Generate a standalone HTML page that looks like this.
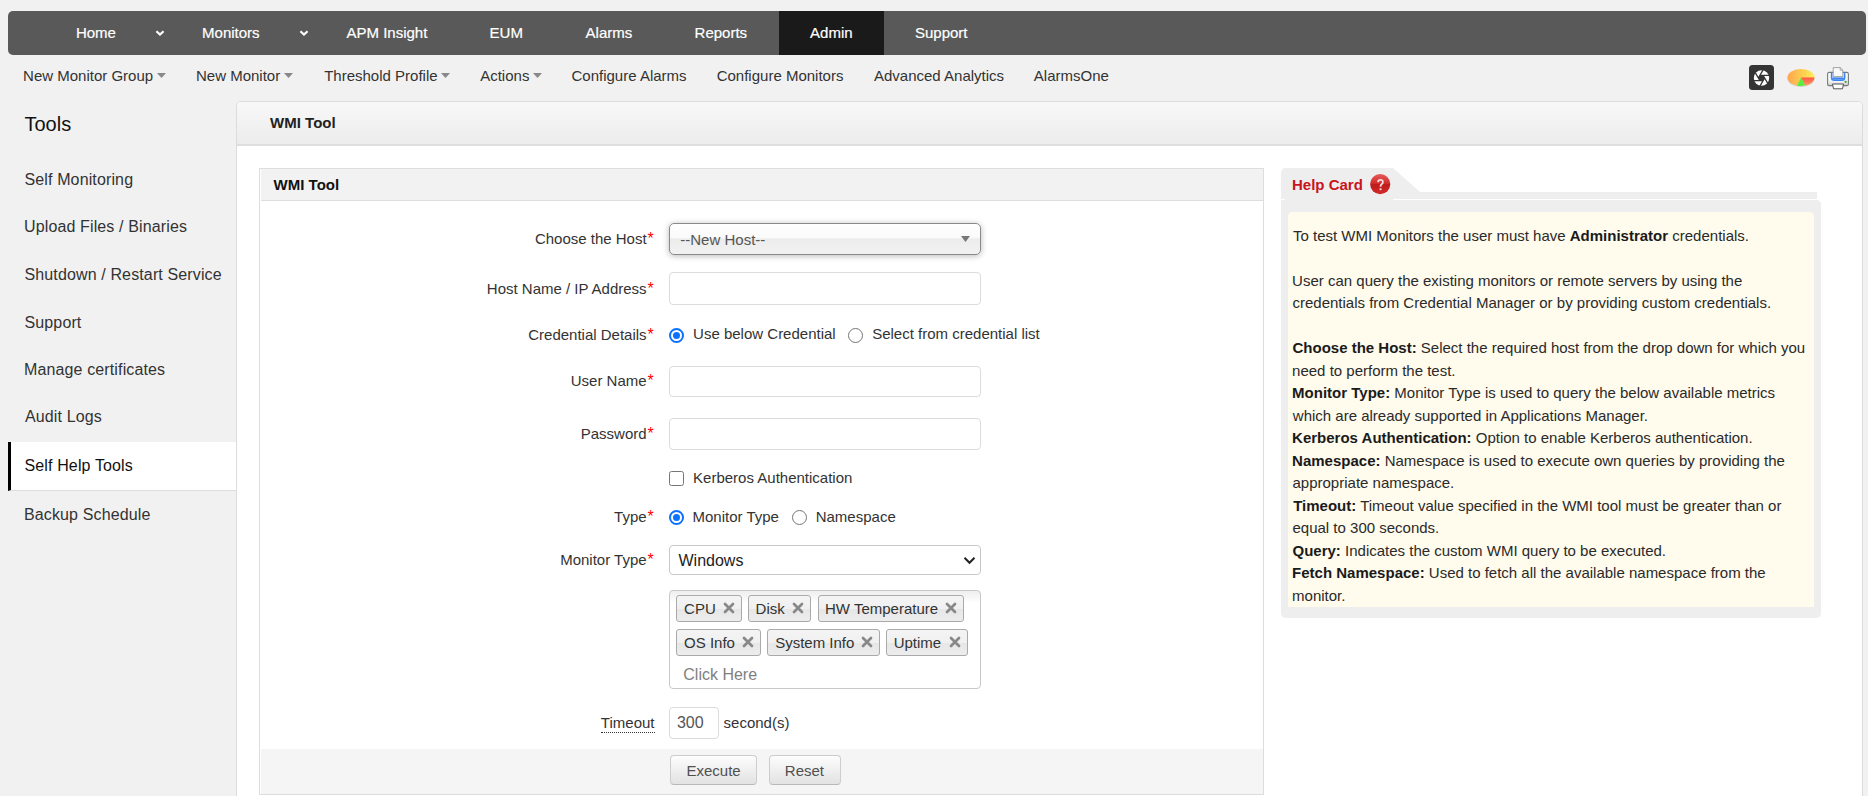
<!DOCTYPE html>
<html><head><meta charset="utf-8"><title>WMI Tool</title>
<style>
*{margin:0;padding:0;box-sizing:border-box}
html,body{width:1868px;height:796px;overflow:hidden}
body{background:#f1f1f1;font-family:"Liberation Sans",sans-serif;position:relative}
.t{position:absolute;white-space:nowrap}
b{font-weight:bold;color:#1a1a1a}
#nav{position:absolute;left:8px;top:11px;width:1858px;height:44px;background:#595959;border-radius:5px}
#admin{position:absolute;left:779px;top:11px;width:105px;height:44px;background:#1a1a1a}
.chev,.tri{position:absolute}
.nv{-webkit-text-stroke:0.2px #fff}
#ic1{position:absolute;left:1749px;top:65px;width:24px;height:25px}
#ic2{position:absolute;left:1786.5px;top:67.5px}
#ic3{position:absolute;left:1826px;top:67px}
#selitem{position:absolute;left:8px;top:442px;width:228px;height:49px;background:#fff;border-left:3px solid #000;border-bottom:1px solid #ddd}
#panel{position:absolute;left:236px;top:101px;width:1627px;height:720px;background:#fff;border:1px solid #dcdcdc;border-radius:5px 5px 0 0;overflow:hidden}
#phead{position:absolute;left:0;top:0;right:0;height:44px;background:linear-gradient(#f8f8f8,#ececec);border-bottom:2px solid #dedede}
#box{position:absolute;left:259px;top:168px;width:1005px;height:627px;background:#fff;border:1px solid #dddddd}
#bhead{position:absolute;left:1px;top:0;right:0;height:32px;background:#f2f2f2;border-bottom:1px solid #dedede}
#bfoot{position:absolute;left:1px;top:580px;right:0;height:45px;background:#f5f5f5}
.lbl{color:#333}
.star{color:#f00;font-size:16px;line-height:20px;margin-top:0.5px;margin-left:0.5px}
.dot{border-bottom:1px dotted #333;padding-bottom:1px}
#sel1{position:absolute;left:669px;top:223px;width:312px;height:32px;border:1px solid #8a8a8a;border-radius:5px;background:linear-gradient(#ffffff 0%,#fafafa 45%,#ececec 50%,#f2f2f2 100%);box-shadow:0 1px 6px rgba(0,0,0,0.28)}
.inp{position:absolute;left:669px;width:312px;border:1px solid #dcdcdc;border-radius:4px;background:#fff}
.rad{position:absolute;width:15px;height:15px;border-radius:50%;border:1px solid #767676;background:#fff}
.rad.on{border:2px solid #0b72ff}
.rad.on i{position:absolute;left:2px;top:2px;width:7px;height:7px;border-radius:50%;background:#0b72ff}
.chk{position:absolute;width:15px;height:15px;border:1px solid #767676;border-radius:2.5px;background:#fff}
#sel2{position:absolute;left:669px;top:545px;width:312px;height:30px;border:1px solid #c8c8c8;border-radius:4px;background:#fff}
#multi{position:absolute;left:669px;top:590px;width:312px;height:99px;border:1px solid #c8c8c8;border-radius:4px;background:linear-gradient(#eeeeee 0px,#ffffff 12px)}
.chip{position:absolute;height:27px;border:1px solid #aaa;border-radius:3px;background:linear-gradient(#f4f4f4 0%,#f0f0f0 50%,#e6e6e6 51%,#ededed 100%)}
.btn{position:absolute;height:30px;border:1px solid #cdcdcd;border-bottom-color:#b8b8b8;border-radius:4px;background:linear-gradient(#fdfdfd,#e2e2e2)}
#hc{position:absolute;left:0;top:0}
#hctab{position:absolute;left:1281px;top:168px;width:112px;height:32px;background:#eeeeee;border-radius:5px 0 0 0}
#hcline1{position:absolute;left:1281px;top:191.5px;width:536px;height:8px;background:linear-gradient(135deg, transparent 0, transparent 0);}
#hcbody{position:absolute;left:1281px;top:200px;width:540px;height:418px;background:#eeeeee;border-radius:0 5px 5px 5px}
#hcyel{position:absolute;left:1288px;top:212px;width:526px;height:395px;background:#fefaeb;border-radius:5px 5px 0 0}
</style></head>
<body>
<div id="nav"></div>
<div id="admin"></div>
<div class="t nv" style="left:75.9px;top:23.30px;font-size:15px;line-height:19px;color:#fff;">Home</div>
<div class="t nv" style="left:202.1px;top:23.30px;font-size:15px;line-height:19px;color:#fff;">Monitors</div>
<div class="t nv" style="left:346.5px;top:23.30px;font-size:15px;line-height:19px;color:#fff;">APM Insight</div>
<div class="t nv" style="left:489.6px;top:23.30px;font-size:15px;line-height:19px;color:#fff;">EUM</div>
<div class="t nv" style="left:585.6px;top:23.30px;font-size:15px;line-height:19px;color:#fff;">Alarms</div>
<div class="t nv" style="left:694.6px;top:23.30px;font-size:15px;line-height:19px;color:#fff;">Reports</div>
<div class="t nv" style="left:810.1px;top:23.30px;font-size:15px;line-height:19px;color:#fff;">Admin</div>
<div class="t nv" style="left:915.0px;top:23.30px;font-size:15px;line-height:19px;color:#fff;">Support</div>
<svg class="chev" style="left:154.5px;top:29px" width="10" height="8" viewBox="0 0 10 8"><path d="M1.4 2.2 L5 5.6 L8.6 2.2" stroke="#fff" stroke-width="2.1" fill="none"/></svg>
<svg class="chev" style="left:298.5px;top:29px" width="10" height="8" viewBox="0 0 10 8"><path d="M1.4 2.2 L5 5.6 L8.6 2.2" stroke="#fff" stroke-width="2.1" fill="none"/></svg>
<div class="t " style="left:23.1px;top:66.30px;font-size:15px;line-height:19px;color:#333;">New Monitor Group</div>
<div class="t " style="left:196.0px;top:66.30px;font-size:15px;line-height:19px;color:#333;">New Monitor</div>
<div class="t " style="left:324.2px;top:66.30px;font-size:15px;line-height:19px;color:#333;">Threshold Profile</div>
<div class="t " style="left:480.2px;top:66.30px;font-size:15px;line-height:19px;color:#333;">Actions</div>
<div class="t " style="left:571.5px;top:66.30px;font-size:15px;line-height:19px;color:#333;">Configure Alarms</div>
<div class="t " style="left:716.7px;top:66.30px;font-size:15px;line-height:19px;color:#333;">Configure Monitors</div>
<div class="t " style="left:874.0px;top:66.30px;font-size:15px;line-height:19px;color:#333;">Advanced Analytics</div>
<div class="t " style="left:1033.8px;top:66.30px;font-size:15px;line-height:19px;color:#333;">AlarmsOne</div>
<svg class="tri" style="left:156.9px;top:73px" width="9" height="5" viewBox="0 0 9 5"><path d="M0 0 H9 L4.5 5 Z" fill="#888"/></svg>
<svg class="tri" style="left:284.0px;top:73px" width="9" height="5" viewBox="0 0 9 5"><path d="M0 0 H9 L4.5 5 Z" fill="#888"/></svg>
<svg class="tri" style="left:441.0px;top:73px" width="9" height="5" viewBox="0 0 9 5"><path d="M0 0 H9 L4.5 5 Z" fill="#888"/></svg>
<svg class="tri" style="left:532.7px;top:73px" width="9" height="5" viewBox="0 0 9 5"><path d="M0 0 H9 L4.5 5 Z" fill="#888"/></svg>
<div id="ic1"><svg width="25" height="25" viewBox="0 0 25 25">
<rect x="0" y="0" width="25" height="25" rx="3.5" fill="#353535"/>
<circle cx="12.5" cy="13.0" r="7.7" fill="#fff"/>
<polygon points="10.94,10.30 14.06,10.30 15.62,13.00 14.06,15.70 10.94,15.70 9.38,13.00" fill="#353535"/>
<path d="M10.94 10.30L20.31 10.30M14.06 10.30L18.74 18.41M15.62 13.00L10.93 21.11M14.06 15.70L4.69 15.70M10.94 15.70L6.26 7.59M9.38 13.00L14.07 4.89" stroke="#353535" stroke-width="1.3" fill="none"/>
</svg></div>
<div id="ic2"><svg width="28" height="20" viewBox="0 0 28 20">
<defs><linearGradient id="pg" x1="0" y1="0" x2="1" y2="0"><stop offset="0" stop-color="#ffa64d"/><stop offset="1" stop-color="#ffee55"/></linearGradient>
<linearGradient id="pr" x1="0" y1="0" x2="0" y2="1"><stop offset="0" stop-color="#ff5544"/><stop offset="1" stop-color="#ff9966"/></linearGradient></defs>
<ellipse cx="14" cy="10.5" rx="13.5" ry="8.5" fill="#d8d0d0"/>
<ellipse cx="14" cy="9.5" rx="13.5" ry="8.5" fill="url(#pg)"/>
<path d="M14 9.5 L27.5 9.5 A13.5 8.5 0 0 1 18 17.6 Z" fill="url(#pr)"/>
<path d="M14 9.5 L18 17.6 A13.5 8.5 0 0 1 10 17.8 Z" fill="#55ee44"/>
</svg></div>
<div id="ic3"><svg width="24" height="23" viewBox="0 0 24 23">
<defs><linearGradient id="bd" x1="0" y1="0" x2="0" y2="1"><stop offset="0" stop-color="#ffffff"/><stop offset="0.7" stop-color="#f2f2f2"/><stop offset="1" stop-color="#c8c8c8"/></linearGradient></defs>
<path d="M1.6 7 Q1.6 5.4 3.2 5.4 H20.8 Q22.4 5.4 22.4 7 V17.2 Q22.4 18.6 21 18.6 H3 Q1.6 18.6 1.6 17.2 Z" fill="url(#bd)" stroke="#7a7a7a" stroke-width="1.1"/>
<path d="M5.6 5.6 V10.5 Q5.6 13.2 8.3 13.2 H15.9 Q18.6 13.2 18.6 10.5 V5.6" fill="none" stroke="#3a86f5" stroke-width="1.6"/>
<path d="M6.6 10.4 H17.6 V12.6 H6.6 Z" fill="#3a86f5"/>
<path d="M7.2 0.6 H14.2 L16.8 3.2 V9.6 H7.2 Z" fill="#f9f9f9" stroke="#9a9a9a" stroke-width="0.9"/>
<path d="M14.2 0.6 V3.2 H16.8" fill="none" stroke="#9a9a9a" stroke-width="0.8"/>
<path d="M6.5 17 L7.5 21.8 H16.5 L17.5 17 Z" fill="#fff" stroke="#555" stroke-width="1"/>
<circle cx="19.6" cy="14.8" r="1.1" fill="#22aa22"/>
</svg></div>
<div class="t " style="left:24.5px;top:111.57px;font-size:20px;line-height:25px;color:#111;">Tools</div>
<div id="selitem"></div>
<div class="t " style="left:24.5px;top:170.45px;font-size:16px;line-height:20px;color:#333;letter-spacing:0.13px;">Self Monitoring</div>
<div class="t " style="left:24.0px;top:217.45px;font-size:16px;line-height:20px;color:#333;letter-spacing:0.13px;">Upload Files / Binaries</div>
<div class="t " style="left:24.5px;top:265.45px;font-size:16px;line-height:20px;color:#333;letter-spacing:0.13px;">Shutdown / Restart Service</div>
<div class="t " style="left:24.5px;top:313.45px;font-size:16px;line-height:20px;color:#333;letter-spacing:0.13px;">Support</div>
<div class="t " style="left:24.0px;top:360.45px;font-size:16px;line-height:20px;color:#333;letter-spacing:0.13px;">Manage certificates</div>
<div class="t " style="left:25.0px;top:407.45px;font-size:16px;line-height:20px;color:#333;letter-spacing:0.13px;">Audit Logs</div>
<div class="t " style="left:24.5px;top:456.45px;font-size:16px;line-height:20px;color:#111;letter-spacing:0.13px;">Self Help Tools</div>
<div class="t " style="left:24.0px;top:505.45px;font-size:16px;line-height:20px;color:#333;letter-spacing:0.13px;">Backup Schedule</div>
<div id="panel"><div id="phead"></div></div>
<div class="t " style="left:270.1px;top:113.30px;font-size:15px;line-height:19px;color:#222;font-weight:bold;">WMI Tool</div>
<div id="box"><div id="bhead"></div><div id="bfoot"></div></div>
<div class="t " style="left:273.6px;top:175.30px;font-size:15px;line-height:19px;color:#111;font-weight:bold;">WMI Tool</div>
<div class="t lbl" style="right:1221.4px;top:228.80px;font-size:15px;line-height:20px">Choose the Host</div>
<div class="t star" style="left:647.1px;top:228.80px">*</div>
<div class="t lbl" style="right:1221.4px;top:278.80px;font-size:15px;line-height:20px">Host Name / IP Address</div>
<div class="t star" style="left:647.1px;top:278.80px">*</div>
<div class="t lbl" style="right:1221.4px;top:324.80px;font-size:15px;line-height:20px">Credential Details</div>
<div class="t star" style="left:647.1px;top:324.80px">*</div>
<div class="t lbl" style="right:1221.4px;top:370.80px;font-size:15px;line-height:20px">User Name</div>
<div class="t star" style="left:647.1px;top:370.80px">*</div>
<div class="t lbl" style="right:1221.4px;top:423.80px;font-size:15px;line-height:20px">Password</div>
<div class="t star" style="left:647.1px;top:423.80px">*</div>
<div class="t lbl" style="right:1221.4px;top:506.80px;font-size:15px;line-height:20px">Type</div>
<div class="t star" style="left:647.1px;top:506.80px">*</div>
<div class="t lbl" style="right:1221.4px;top:549.80px;font-size:15px;line-height:20px">Monitor Type</div>
<div class="t star" style="left:647.1px;top:549.80px">*</div>
<div class="t lbl" style="right:1213.5px;top:712.80px;font-size:15px;line-height:20px"><span class="dot">Timeout</span></div>
<div id="sel1"></div>
<div class="t " style="left:680.3px;top:230.30px;font-size:15px;line-height:19px;color:#555;">--New Host--</div>
<svg style="position:absolute;left:960.5px;top:236px" width="9" height="6" viewBox="0 0 9 6"><path d="M0 0H9L4.5 6Z" fill="#777"/></svg>
<div class="inp" style="top:272px;height:33px"></div>
<div class="inp" style="top:365.5px;height:31.5px"></div>
<div class="inp" style="top:417.5px;height:32.5px"></div>
<div class="rad on" style="left:669px;top:328px"><i></i></div>
<div class="t " style="left:693.1px;top:324.30px;font-size:15px;line-height:19px;color:#333;">Use below Credential</div>
<div class="rad" style="left:848px;top:328px"></div>
<div class="t " style="left:872.2px;top:324.30px;font-size:15px;line-height:19px;color:#333;">Select from credential list</div>
<div class="chk" style="left:669px;top:471px"></div>
<div class="t " style="left:693.1px;top:468.30px;font-size:15px;line-height:19px;color:#333;">Kerberos Authentication</div>
<div class="rad on" style="left:669px;top:510px"><i></i></div>
<div class="t " style="left:692.5px;top:507.30px;font-size:15px;line-height:19px;color:#333;">Monitor Type</div>
<div class="rad" style="left:792px;top:510px"></div>
<div class="t " style="left:815.7px;top:507.30px;font-size:15px;line-height:19px;color:#333;">Namespace</div>
<div id="sel2"></div>
<div class="t " style="left:678.5px;top:551.45px;font-size:16px;line-height:20px;color:#222;">Windows</div>
<svg style="position:absolute;left:962.5px;top:556px" width="13" height="9" viewBox="0 0 13 9"><path d="M1.5 1.8 L6.5 6.8 L11.5 1.8" stroke="#222" stroke-width="2" fill="none"/></svg>
<div id="multi"></div>
<div class="chip" style="left:676.3px;top:595px;width:66.0px"></div>
<div class="t " style="left:684.1px;top:599.30px;font-size:15px;line-height:19px;color:#333;">CPU</div>
<svg class="x" style="position:absolute;left:723.0px;top:601.5px" width="12" height="12" viewBox="0 0 12 12"><path d="M2 2L10 10M10 2L2 10" stroke="#888" stroke-width="2.7" stroke-linecap="round"/></svg>
<div class="chip" style="left:748.2px;top:595px;width:63.0px"></div>
<div class="t " style="left:755.6px;top:599.30px;font-size:15px;line-height:19px;color:#333;">Disk</div>
<svg class="x" style="position:absolute;left:791.9px;top:601.5px" width="12" height="12" viewBox="0 0 12 12"><path d="M2 2L10 10M10 2L2 10" stroke="#888" stroke-width="2.7" stroke-linecap="round"/></svg>
<div class="chip" style="left:817.6px;top:595px;width:146.8px"></div>
<div class="t " style="left:825.0px;top:599.30px;font-size:15px;line-height:19px;color:#333;">HW Temperature</div>
<svg class="x" style="position:absolute;left:945.1px;top:601.5px" width="12" height="12" viewBox="0 0 12 12"><path d="M2 2L10 10M10 2L2 10" stroke="#888" stroke-width="2.7" stroke-linecap="round"/></svg>
<div class="chip" style="left:676.3px;top:629px;width:85.0px"></div>
<div class="t " style="left:684.1px;top:633.30px;font-size:15px;line-height:19px;color:#333;">OS Info</div>
<svg class="x" style="position:absolute;left:742.0px;top:635.5px" width="12" height="12" viewBox="0 0 12 12"><path d="M2 2L10 10M10 2L2 10" stroke="#888" stroke-width="2.7" stroke-linecap="round"/></svg>
<div class="chip" style="left:767.4px;top:629px;width:112.9px"></div>
<div class="t " style="left:775.2px;top:633.30px;font-size:15px;line-height:19px;color:#333;">System Info</div>
<svg class="x" style="position:absolute;left:861.0px;top:635.5px" width="12" height="12" viewBox="0 0 12 12"><path d="M2 2L10 10M10 2L2 10" stroke="#888" stroke-width="2.7" stroke-linecap="round"/></svg>
<div class="chip" style="left:886.3px;top:629px;width:82.0px"></div>
<div class="t " style="left:893.7px;top:633.30px;font-size:15px;line-height:19px;color:#333;">Uptime</div>
<svg class="x" style="position:absolute;left:949.0px;top:635.5px" width="12" height="12" viewBox="0 0 12 12"><path d="M2 2L10 10M10 2L2 10" stroke="#888" stroke-width="2.7" stroke-linecap="round"/></svg>
<div class="t " style="left:683.3px;top:665.45px;font-size:16px;line-height:20px;color:#808080;">Click Here</div>
<div class="inp" style="left:669px;top:707px;width:50px;height:32px"></div>
<div class="t " style="left:676.9px;top:713.45px;font-size:16px;line-height:20px;color:#555;">300</div>
<div class="t " style="left:723.6px;top:712.80px;font-size:15px;line-height:19px;color:#333;">second(s)</div>
<div class="btn" style="left:670px;top:755px;width:87px"></div>
<div class="t " style="left:686.5px;top:760.80px;font-size:15px;line-height:19px;color:#505050;">Execute</div>
<div class="btn" style="left:769px;top:755px;width:71.5px"></div>
<div class="t " style="left:784.8px;top:760.80px;font-size:15px;line-height:19px;color:#505050;">Reset</div>
<svg style="position:absolute;left:1281px;top:168px" width="541" height="451" viewBox="0 0 541 451">
<path d="M0 5 Q0 0 5 0 H112 L139 24 H536 V32 H0 Z" fill="#eeeeee"/>
<rect x="0" y="31" width="4" height="1" fill="#ffffff"/>
<rect x="112" y="31" width="424" height="1" fill="#ffffff"/>
<path d="M0 32 H535 Q540 32 540 37 V445 Q540 450 535 450 H5 Q0 450 0 445 Z" fill="#eeeeee"/>
<path d="M7 49 Q7 44 12 44 H528 Q533 44 533 49 V439 H7 Z" fill="#fffbed"/>
</svg>
<div class="t " style="left:1292.0px;top:175.30px;font-size:15px;line-height:19px;color:#c8141c;font-weight:bold;">Help Card</div>
<svg style="position:absolute;left:1370.2px;top:173.6px" width="21" height="21" viewBox="0 0 21 21">
<defs><linearGradient id="qg" x1="0" y1="0" x2="0" y2="1"><stop offset="0" stop-color="#e65a5a"/><stop offset="0.5" stop-color="#cf2a2a"/><stop offset="0.52" stop-color="#bf1c1c"/><stop offset="1" stop-color="#d22a2a"/></linearGradient></defs>
<circle cx="10.2" cy="10.1" r="10.1" fill="url(#qg)"/>
<path d="M8.1 8.3 Q8.1 5.9 10.5 5.9 Q12.9 5.9 12.9 8 Q12.9 9.4 11.6 10.2 Q10.5 10.9 10.5 12.7" stroke="#f3dcdc" stroke-width="1.8" fill="none"/>
<rect x="9.6" y="14.3" width="1.9" height="1.9" fill="#f3dcdc"/>
</svg>
<div class="t " style="left:1293.0px;top:226.30px;font-size:15px;line-height:19px;color:#2a2a2a;">To test WMI Monitors the user must have <b>Administrator</b> credentials.</div>
<div class="t " style="left:1292.1px;top:271.30px;font-size:15px;line-height:19px;color:#2a2a2a;">User can query the existing monitors or remote servers by using the</div>
<div class="t " style="left:1292.5px;top:293.30px;font-size:15px;line-height:19px;color:#2a2a2a;">credentials from Credential Manager or by providing custom credentials.</div>
<div class="t " style="left:1292.5px;top:338.30px;font-size:15px;line-height:19px;color:#2a2a2a;"><b>Choose the Host:</b> Select the required host from the drop down for which you</div>
<div class="t " style="left:1292.1px;top:361.30px;font-size:15px;line-height:19px;color:#2a2a2a;">need to perform the test.</div>
<div class="t " style="left:1292.1px;top:383.30px;font-size:15px;line-height:19px;color:#2a2a2a;"><b>Monitor Type:</b> Monitor Type is used to query the below available metrics</div>
<div class="t " style="left:1292.8px;top:406.30px;font-size:15px;line-height:19px;color:#2a2a2a;">which are already supported in Applications Manager.</div>
<div class="t " style="left:1292.1px;top:428.30px;font-size:15px;line-height:19px;color:#2a2a2a;"><b>Kerberos Authentication:</b> Option to enable Kerberos authentication.</div>
<div class="t " style="left:1292.1px;top:451.30px;font-size:15px;line-height:19px;color:#2a2a2a;"><b>Namespace:</b> Namespace is used to execute own queries by providing the</div>
<div class="t " style="left:1292.5px;top:473.30px;font-size:15px;line-height:19px;color:#2a2a2a;">appropriate namespace.</div>
<div class="t " style="left:1293.2px;top:496.30px;font-size:15px;line-height:19px;color:#2a2a2a;"><b>Timeout:</b> Timeout value specified in the WMI tool must be greater than or</div>
<div class="t " style="left:1292.5px;top:518.30px;font-size:15px;line-height:19px;color:#2a2a2a;">equal to 300 seconds.</div>
<div class="t " style="left:1292.5px;top:541.30px;font-size:15px;line-height:19px;color:#2a2a2a;"><b>Query:</b> Indicates the custom WMI query to be executed.</div>
<div class="t " style="left:1292.1px;top:563.30px;font-size:15px;line-height:19px;color:#2a2a2a;"><b>Fetch Namespace:</b> Used to fetch all the available namespace from the</div>
<div class="t " style="left:1292.1px;top:586.30px;font-size:15px;line-height:19px;color:#2a2a2a;">monitor.</div>

</body></html>
